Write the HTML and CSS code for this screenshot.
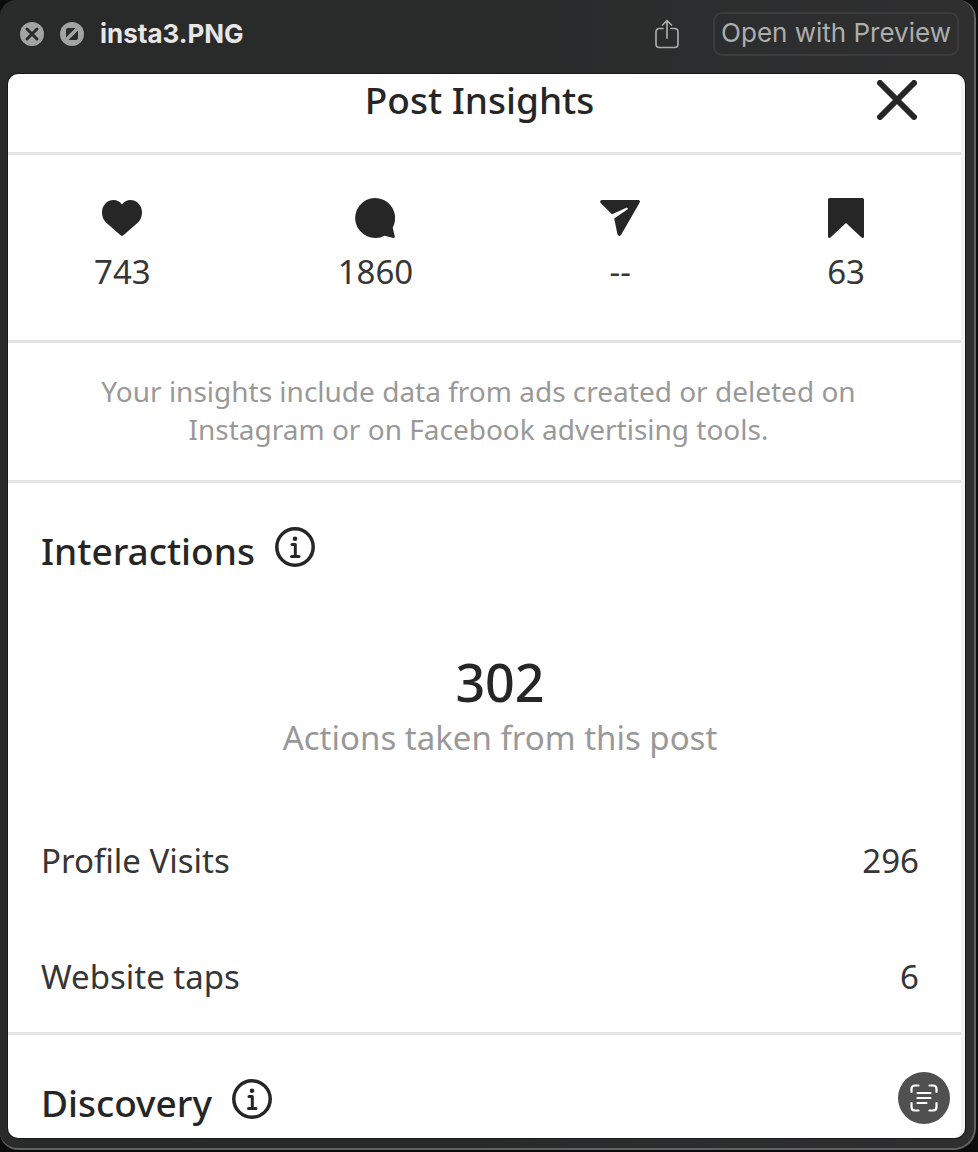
FILE: index.html
```html
<!DOCTYPE html>
<html lang="en">
<head>
<meta charset="utf-8">
<meta name="viewport" content="width=device-width, initial-scale=1">
<title>insta3.PNG</title>
<link rel="stylesheet" href="styles.css">
</head>
<body>
<div class="window">
  <header class="titlebar">
    <button class="control" aria-label="Close">
      <svg width="24" height="24" viewBox="0 0 24 24"><circle cx="12" cy="12" r="12" fill="#a2a3a3"/><path d="M7 7l10 10M17 7L7 17" stroke="#292b2b" stroke-width="3" stroke-linecap="round"/></svg>
    </button>
    <button class="control" aria-label="Full screen">
      <svg width="24" height="24" viewBox="0 0 24 24"><circle cx="12" cy="12" r="12" fill="#a2a3a3"/><path d="M6 15.500V8Q6 6 8 6h7.500zM18 8.500V16Q18 18 16 18H8.500z" fill="#292b2b"/></svg>
    </button>
    <h1 class="filename">insta3.PNG</h1>
    <button class="share" aria-label="Share">
      <svg width="24" height="30" viewBox="0 0 24 30" fill="none" stroke="#aaabab" stroke-width="1.700" stroke-linecap="round" stroke-linejoin="round"><path d="M8 9.500H4.500Q1 9.500 1 13v12q0 3.500 3.500 3.500h15q3.500 0 3.500-3.500V13q0-3.500-3.500-3.500H16M12 19V2M7.500 6L12 1.500 16.500 6"/></svg>
    </button>
    <button class="open">Open with Preview</button>
  </header>
  <main class="sheet">
    <div class="heading">
      <h2 class="heading-title">Post Insights</h2>
      <button class="dismiss" aria-label="Close insights">
        <svg width="40" height="40" viewBox="0 0 40 40"><path d="M3 3l34 34M37 3L3 37" stroke="#262626" stroke-width="6" stroke-linecap="round"/></svg>
      </button>
    </div>
    <ul class="stats">
      <li class="stat">
        <svg width="40" height="40" viewBox="0 0 40 40" fill="#262626"><path d="M20 38Q19 37.800 18 36.800L4 24.500Q0 20.500 0 14.500C0 7.500 5 2 11.500 2 15 2 18 3.500 20 6.500 22 3.500 25 2 28.500 2 35 2 40 7.500 40 14.500q0 6-4 10L22 36.800Q21 37.800 20 38z"/></svg>
        <span>743</span>
      </li>
      <li class="stat">
        <svg width="40" height="40" viewBox="0 0 40 40" fill="#262626"><path d="M20 0a20 20 0 1 0 9.500 37.700L38.500 40q1.500 0 1.300-1.500L37.700 29.500A20 20 0 0 0 20 0z"/></svg>
        <span>1860</span>
      </li>
      <li class="stat">
        <svg width="40" height="40" viewBox="0 0 40 40" fill="#262626"><path d="M1.500 2H38.500Q40.500 2.500 39.700 4.500L21 37Q19 39 17.500 36.500L14.200 20.500 28 11 27 9.500 12 16.300 .6 5Q-.6 2.800 1.500 2z"/></svg>
        <span>--</span>
      </li>
      <li class="stat">
        <svg width="36" height="40" viewBox="0 0 36 40" fill="#262626"><path d="M1.500 0h33Q36 0 36 1.500v37q0 2.200-2.500 1L18 25 2.500 39.500Q0 40.700 0 38.500v-37Q0 0 1.500 0z"/></svg>
        <span>63</span>
      </li>
    </ul>
    <p class="note">Your insights include data from ads created or deleted on<br>Instagram or on Facebook advertising tools.</p>
    <section class="interactions">
      <div class="section-head">
        <h3 class="section-title">Interactions</h3>
        <button class="info" aria-label="About interactions">
          <svg width="40" height="40" viewBox="0 0 40 40" fill="none" stroke="#262626"><circle cx="20" cy="20" r="18.200" stroke-width="3.500"/><circle cx="20" cy="11.800" r="2.300" fill="#262626" stroke="none"/><path d="M17 17.500h3.300V29M16.500 29.500h7.500" stroke-width="3" stroke-linecap="round" stroke-linejoin="round"/></svg>
        </button>
      </div>
      <div class="total">
        <strong class="total-value">302</strong>
        <span class="total-label">Actions taken from this post</span>
      </div>
      <dl class="rows">
        <div class="row"><dt>Profile Visits</dt><dd>296</dd></div>
        <div class="row"><dt>Website taps</dt><dd>6</dd></div>
      </dl>
    </section>
    <section class="discovery">
      <div class="section-head">
        <h3 class="section-title">Discovery</h3>
        <button class="info" aria-label="About discovery">
          <svg width="40" height="40" viewBox="0 0 40 40" fill="none" stroke="#262626"><circle cx="20" cy="20" r="18.200" stroke-width="3.500"/><circle cx="20" cy="11.800" r="2.300" fill="#262626" stroke="none"/><path d="M17 17.500h3.300V29M16.500 29.500h7.500" stroke-width="3" stroke-linecap="round" stroke-linejoin="round"/></svg>
        </button>
      </div>
    </section>
    <button class="scan" aria-label="Live text">
      <svg width="28" height="28" viewBox="0 0 28 28" fill="none" stroke="#fff" stroke-width="2.200" stroke-linecap="round"><path d="M1.500 8V5q0-3.500 3.500-3.500h3.500M19.500 1.500H23q3.500 0 3.500 3.500v3M26.500 19v4q0 3.500-3.500 3.500h-3.500M8.500 26.500H5q-3.500 0-3.500-3.500v-4M7.500 9h13M7.500 14h13M7.500 19h9"/></svg>
    </button>
  </main>
</div>
</body>
</html>
```

FILE: styles.css
```css
* { box-sizing: border-box; }

body {
  margin: 0;
  padding: 0 2px 2px 0;
  min-height: 100vh;
  display: flex;
  background: #0c0c0c;
  font-family: "Noto Sans", "Open Sans", sans-serif;
  color: #262626;
}

button {
  padding: 0;
  border: 0;
  background: none;
  font: inherit;
  color: inherit;
}

button svg { display: block; }

h1, h2, h3, p, ul, dl, dd { margin: 0; }

.window {
  flex: 1;
  display: flex;
  flex-direction: column;
  padding: 0 9px 10px 8px;
  border: solid #606162;
  border-width: 0 2px 2px 0;
  border-radius: 16px 18px 22px 18px;
  background: linear-gradient(90deg, #292b2b 50%, #2f2f30);
}

.titlebar {
  display: flex;
  align-items: center;
  gap: 16px;
  height: 74px;
  padding: 0 6px 6px 12px;
  font-family: Inter, sans-serif;
}

.filename {
  flex: 1;
  font-size: 26px;
  line-height: 32px;
  font-weight: 700;
  color: #e6e6e6;
}

.share { padding-right: 18px; }

.open {
  height: 44px;
  padding: 0 6px 2px;
  border: 2px solid #3b3c3c;
  border-radius: 9px;
  font-size: 26px;
  line-height: 32px;
  color: #acadad;
}

.sheet {
  position: relative;
  flex: 1;
  border-right: 4px solid #f3f3f3;
  border-radius: 10px;
  background: #fff;
  box-shadow: 0 0 0 1px #181919;
}

.heading {
  display: grid;
  grid-template-columns: 1fr auto 1fr;
  align-items: center;
  height: 81px;
  padding: 0 44px 27px 34px;
  border-bottom: 3px solid #e4e4e4;
}

.heading-title {
  grid-column: 2;
  font-size: 37px;
  line-height: 48px;
  font-weight: 500;
}

.dismiss { justify-self: end; }

.stats {
  display: flex;
  justify-content: space-between;
  height: 188px;
  padding: 43px 96px 0 86px;
  border-bottom: 3px solid #e4e4e4;
  list-style: none;
}

.stat {
  display: flex;
  flex-direction: column;
  align-items: center;
  gap: 10px;
  font-size: 33px;
  line-height: 48px;
  color: #363636;
}

.note {
  height: 140px;
  padding: 29px 12px 0 0;
  border-bottom: 3px solid #e4e4e4;
  font-size: 28px;
  line-height: 38px;
  text-align: center;
  color: #999;
}

.interactions {
  padding: 44px 42px 0 33px;
  height: 552px;
  border-bottom: 3px solid #e4e4e4;
}

.discovery { padding: 44px 42px 0 33px; }

.section-head {
  display: flex;
  align-items: flex-start;
  gap: 20px;
}

.section-title {
  font-size: 37px;
  line-height: 48px;
  font-weight: 500;
}

.total {
  display: flex;
  flex-direction: column;
  align-items: center;
  padding: 75px 0 0 40px;
}

.total-value {
  font-size: 52px;
  line-height: 64px;
  font-weight: 500;
}

.total-label {
  font-size: 33px;
  line-height: 48px;
  color: #999;
}

.rows { padding-top: 75px; }

.row {
  display: flex;
  justify-content: space-between;
  margin-bottom: 68px;
  font-size: 33px;
  line-height: 48px;
  color: #363636;
}

.scan {
  position: absolute;
  right: 11px;
  bottom: 14px;
  display: grid;
  place-items: center;
  width: 52px;
  height: 52px;
  border-radius: 50%;
  background: #505050;
}
```
